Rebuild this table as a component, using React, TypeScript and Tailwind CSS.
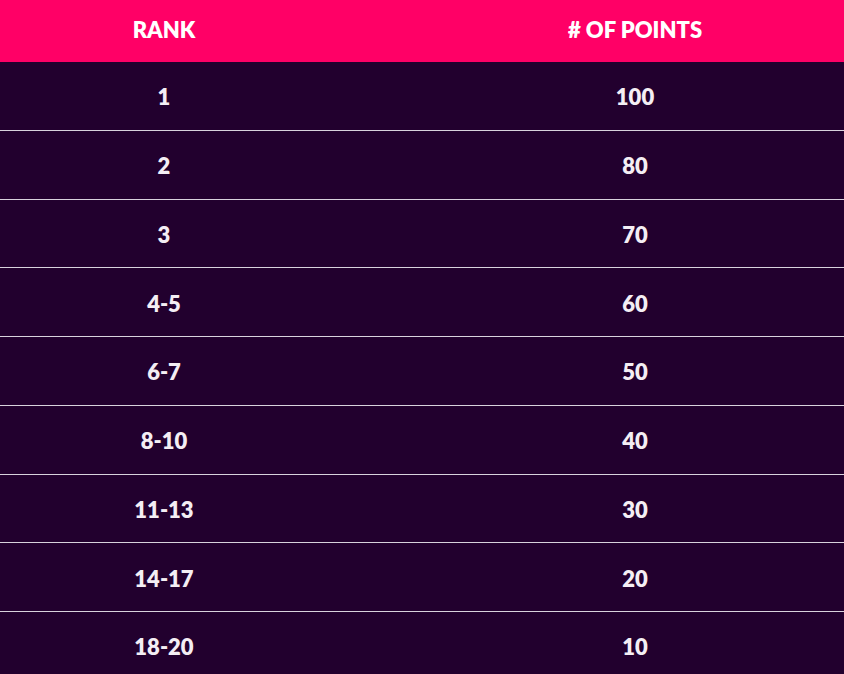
const rows = [
  ['1', '100'],
  ['2', '80'],
  ['3', '70'],
  ['4-5', '60'],
  ['6-7', '50'],
  ['8-10', '40'],
  ['11-13', '30'],
  ['14-17', '20'],
  ['18-20', '10'],
];

export default function App() {
  return (
    <div className="w-[844px] h-[674px] overflow-hidden bg-[#22002e] font-['Lato','Liberation_Sans',sans-serif] font-extrabold text-[22px] text-[#f4eef4]">
      <div className="w-[942px]">
        <div className="grid grid-cols-[328px_614px] h-[62px] bg-[#ff0066] items-center text-white pb-[4px]">
          <div className="text-center">RANK</div>
          <div className="text-center"># OF POINTS</div>
        </div>
        {rows.map(([rank, pts], i) => (
          <div
            key={i}
            className="grid grid-cols-[328px_614px] h-[68.75px] items-center border-b border-[#d8d2dc] pt-[2px]"
          >
            <div className="text-center">{rank}</div>
            <div className="text-center">{pts}</div>
          </div>
        ))}
      </div>
    </div>
  );
}
